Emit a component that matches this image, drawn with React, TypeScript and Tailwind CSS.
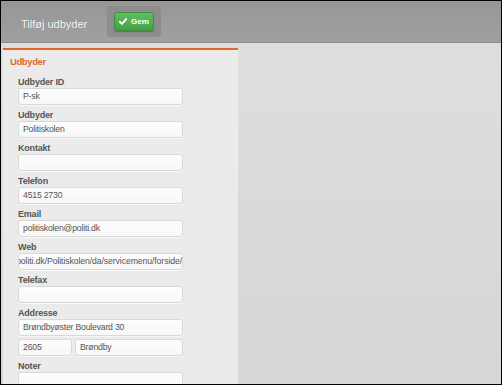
import React from "react";

const Label = ({ text }: { text: string }) => (
  <div className="h-[11px] text-[9px] font-bold leading-[11px] tracking-[-0.2px] text-[#555]">{text}</div>
);

const Field = ({ label, value, rtl }: { label: string; value?: string; rtl?: boolean }) => (
  <div className="mb-[5px]">
    <Label text={label} />
    <Input value={value} rtl={rtl} className="w-[165px]" />
  </div>
);

const Input = ({ value, rtl, className }: { value?: string; rtl?: boolean; className?: string }) => (
  <div
    className={
      "flex h-[17px] items-center overflow-hidden whitespace-nowrap rounded-[3px] border border-[#d9d9d9] bg-gradient-to-b from-[#fdfdfd] to-[#f7f7f7] text-[8.7px] text-[#555] shadow-[0_1px_0_rgba(255,255,255,0.6)] " +
      (rtl ? "justify-end pr-0 tracking-[-0.1px] " : "pl-[4px] tracking-[-0.2px] ") +
      (className ?? "")
    }
  >
    <span className="shrink-0">{value}</span>
  </div>
);

export default function App() {
  return (
    <div
      className="box-border flex h-[385px] w-[502px] flex-col overflow-hidden border border-black bg-[#dadada]"
      style={{ fontFamily: '"Liberation Sans", Arial, sans-serif' }}
    >
      <div className="box-border flex h-[42px] shrink-0 items-center border-b border-[#8b8b8b] bg-gradient-to-b from-[#969696] to-[#a0a0a0] pl-[20px]">
        <div className="w-[86px] pt-[5px] text-[11px] text-[#f6f6f6] [text-shadow:0_0_1px_rgba(0,0,0,0.15)]">Tilføj udbyder</div>
        <div className="flex h-[31px] w-[54px] items-center justify-center rounded-[4px] bg-[#8d8d8d]">
          <div className="flex h-[19px] w-[40px] items-center justify-center gap-[4px] rounded-[3px] border border-[#3f8f3f] bg-gradient-to-b from-[#5fbf5f] to-[#45a045] text-[8px] font-semibold text-white shadow-[0_1px_1px_rgba(0,0,0,0.25)]">
            <svg width="8" height="7" viewBox="0 0 8 7">
              <path d="M0.8 3.8 L3 5.9 L7.3 1" fill="none" stroke="white" strokeWidth="1.9" strokeLinecap="round" strokeLinejoin="round" />
            </svg>
            <span>Gem</span>
          </div>
        </div>
      </div>
      <div className="flex flex-1 bg-gradient-to-b from-[#dedede] to-[#d6d6d6] pt-[5px] pl-[2px]">
        <div className="box-border w-[235px] border-t-2 border-[#e0692a] bg-[#ebebeb] pt-[6px] pl-[7px]">
          <div className="mb-[9px] h-[12px] text-[9.5px] font-bold leading-[12px] tracking-[-0.4px] text-[#e06a2c]">Udbyder</div>
          <div className="pl-[8px]">
            <Field label="Udbyder ID" value="P-sk" />
            <Field label="Udbyder" value="Politiskolen" />
            <Field label="Kontakt" value="" />
            <Field label="Telefon" value="4515 2730" />
            <Field label="Email" value="politiskolen@politi.dk" />
            <Field label="Web" value="http://www.politi.dk/Politiskolen/da/servicemenu/forside/" rtl />
            <Field label="Telefax" value="" />
            <div className="mb-[3px]">
              <Label text="Addresse" />
              <Input value="Brøndbyøster Boulevard 30" className="w-[165px]" />
            </div>
            <div className="mb-[5px] flex gap-[3px]">
              <Input value="2605" className="w-[54px]" />
              <Input value="Brøndby" className="w-[108px]" />
            </div>
            <Field label="Noter" value="" />
          </div>
        </div>
      </div>
    </div>
  );
}
